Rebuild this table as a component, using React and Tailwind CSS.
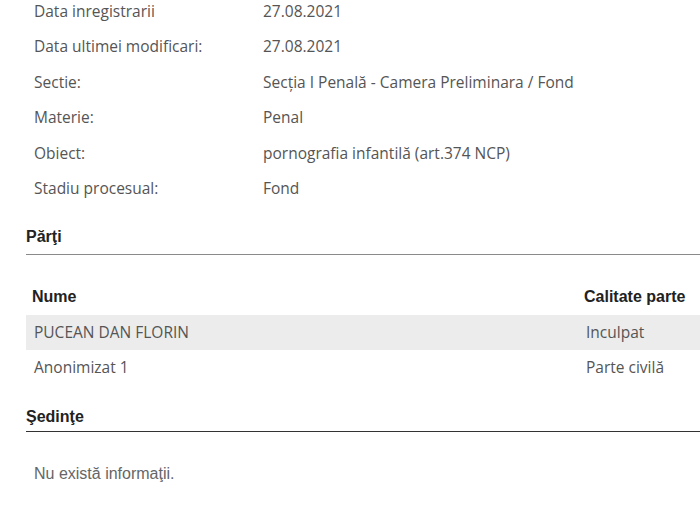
import React from 'react';

const info = [
  ["Data inregistrarii", "27.08.2021"],
  ["Data ultimei modificari:", "27.08.2021"],
  ["Sectie:", "Secția I Penală - Camera Preliminara / Fond"],
  ["Materie:", "Penal"],
  ["Obiect:", "pornografia infantilă (art.374 NCP)"],
  ["Stadiu procesual:", "Fond"],
];

const parti = [
  ["PUCEAN DAN FLORIN", "Inculpat"],
  ["Anonimizat 1", "Parte civilă"],
];

export default function App() {
  return (
    <div className="h-[506px] w-[700px] overflow-hidden bg-white font-['Open_Sans',sans-serif] text-[15.5px] text-[#555]">
      <div className="-mt-[6px]">
        {info.map(([label, value]) => (
          <div key={label} className="flex h-[35.4px] items-center">
            <span className="w-[263px] pl-[34px]">{label}</span>
            <span>{value}</span>
          </div>
        ))}
      </div>

      <div className="ml-[26px] mt-[19px] border-b border-[#8a8a8a] pb-[5px] font-['Liberation_Sans',sans-serif] text-[16px] font-bold text-[#222]">
        Părţi
      </div>

      <div className="ml-[26px] mt-[24px]">
        <div className="flex h-[36px] items-center font-['Liberation_Sans',sans-serif] text-[16px] font-bold text-[#222]">
          <span className="flex-1 pl-[6px]">Nume</span>
          <span className="w-[116px]">Calitate parte</span>
        </div>
        {parti.map(([nume, calitate], i) => (
          <div
            key={nume}
            className={`flex h-[35px] items-center ${i === 0 ? 'bg-[#ececec]' : ''}`}
          >
            <span className="flex-1 pl-[8px]">{nume}</span>
            <span className="w-[114px]">{calitate}</span>
          </div>
        ))}
      </div>

      <div className="ml-[26px] mt-[20px] border-b border-[#333] pb-[2px] font-['Liberation_Sans',sans-serif] text-[16px] font-bold text-[#222]">
        Şedinţe
      </div>

      <div className="mt-[30px] pl-[34px] font-['Liberation_Sans',sans-serif] text-[16px] text-[#666]">
        Nu există informaţii.
      </div>
    </div>
  );
}
